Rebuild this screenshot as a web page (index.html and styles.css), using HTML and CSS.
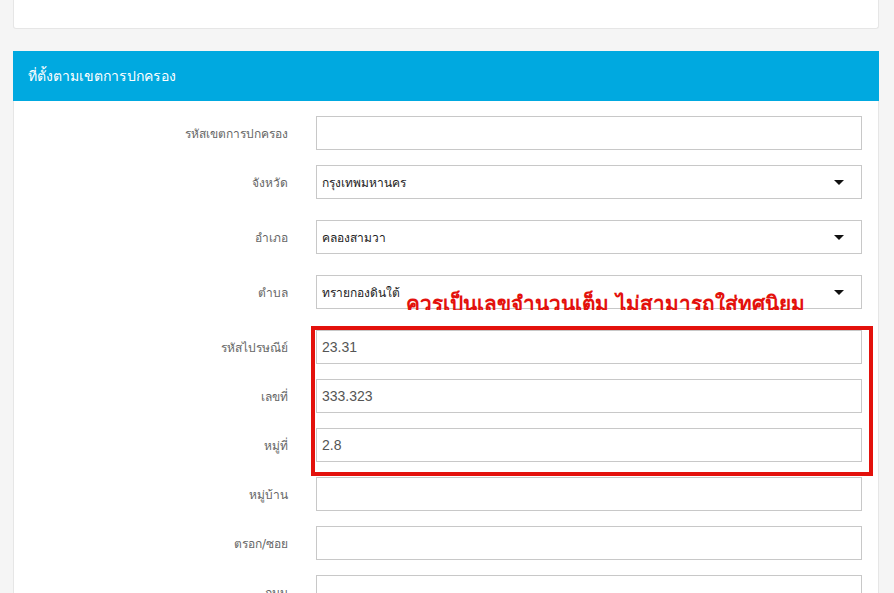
FILE: index.html
```html
<!DOCTYPE html>
<html lang="th">
<head>
<meta charset="utf-8">
<title>ที่ตั้งตามเขตการปกครอง</title>
<link rel="stylesheet" href="styles.css">
</head>
<body>
<div class="page">
  <div class="top-card"></div>

  <section class="panel">
    <div class="panel-heading">ที่ตั้งตามเขตการปกครอง</div>
    <div class="panel-body">
      <div class="row">
        <label class="row-label">รหัสเขตการปกครอง</label>
        <input class="field" type="text" value="">
      </div>
      <div class="row row-select">
        <label class="row-label">จังหวัด</label>
        <div class="field select"><span>กรุงเทพมหานคร</span><i class="caret"></i></div>
      </div>
      <div class="row row-select">
        <label class="row-label">อำเภอ</label>
        <div class="field select"><span>คลองสามวา</span><i class="caret"></i></div>
      </div>
      <div class="row row-select annotated">
        <label class="row-label">ตำบล</label>
        <div class="field select"><span>ทรายกองดินใต้</span><i class="caret"></i></div>
        <div class="note">ควรเป็นเลขจำนวนเต็ม ไม่สามารถใส่ทศนิยม</div>
      </div>
      <div class="highlight">
        <div class="row">
          <label class="row-label">รหัสไปรษณีย์</label>
          <input class="field value" type="text" value="23.31">
        </div>
        <div class="row">
          <label class="row-label">เลขที่</label>
          <input class="field value" type="text" value="333.323">
        </div>
        <div class="row">
          <label class="row-label">หมู่ที่</label>
          <input class="field value" type="text" value="2.8">
        </div>
      </div>
      <div class="row">
        <label class="row-label">หมู่บ้าน</label>
        <input class="field" type="text" value="">
      </div>
      <div class="row">
        <label class="row-label">ตรอก/ซอย</label>
        <input class="field" type="text" value="">
      </div>
      <div class="row">
        <label class="row-label">ถนน</label>
        <input class="field" type="text" value="">
      </div>
    </div>
  </section>
</div>
</body>
</html>
```

FILE: styles.css
```css
* { box-sizing: border-box; }

html, body {
  margin: 0;
  padding: 0;
  background: #f5f5f5;
  font-family: Tahoma, "DejaVu Sans", "Noto Sans", sans-serif;
  overflow: hidden;
}

.page {
  padding: 0 15px 0 13px;
  width: 894px;
  height: 593px;
  overflow: hidden;
}

.top-card {
  height: 29px;
  background: #fff;
  border: 1px solid #e6e6e6;
  border-top: none;
  border-radius: 0 0 3px 3px;
  margin-bottom: 22px;
}

.panel {
  background: #fff;
  border: 1px solid #e6e6e6;
  border-top: none;
}

.panel-heading {
  height: 50px;
  margin: 0 -1px;
  background: #00a9e0;
  color: #fff;
  font-size: 14px;
  line-height: 50px;
  padding-left: 15px;
}

.panel-body {
  padding: 15px 16px 40px 0;
}

.row {
  display: grid;
  grid-template-columns: 274px 546px;
  column-gap: 28px;
  align-items: center;
  margin-bottom: 15px;
}

.row-select { margin-bottom: 21px; }

.row-label {
  text-align: right;
  font-size: 12px;
  color: #666;
}

.field {
  height: 34px;
  width: 546px;
  border: 1px solid #c8c8c8;
  background: #fff;
  margin: 0;
  padding: 0 5px;
  font-family: Arial, "Liberation Sans", sans-serif;
  font-size: 14px;
  color: #555;
  outline: none;
  border-radius: 0;
}

.select {
  display: flex;
  align-items: center;
  justify-content: space-between;
  padding: 0 17px 0 5px;
  font-family: Tahoma, "DejaVu Sans", "Noto Sans", sans-serif;
  font-size: 12px;
  color: #222;
}

.caret {
  width: 0;
  height: 0;
  border-left: 5px solid transparent;
  border-right: 5px solid transparent;
  border-top: 5px solid #111;
}

.annotated { position: relative; }

.note {
  position: absolute;
  left: 392px;
  top: 10px;
  height: 25px;
  overflow: hidden;
  white-space: nowrap;
  color: #e3110c;
  font-weight: bold;
  font-size: 20.7px;
  line-height: 38px;
}

.highlight { position: relative; }

.highlight::after {
  content: "";
  position: absolute;
  left: 297px;
  top: -4px;
  width: 554px;
  height: 142px;
  border: 4px solid #e3110c;
  pointer-events: none;
}
```
